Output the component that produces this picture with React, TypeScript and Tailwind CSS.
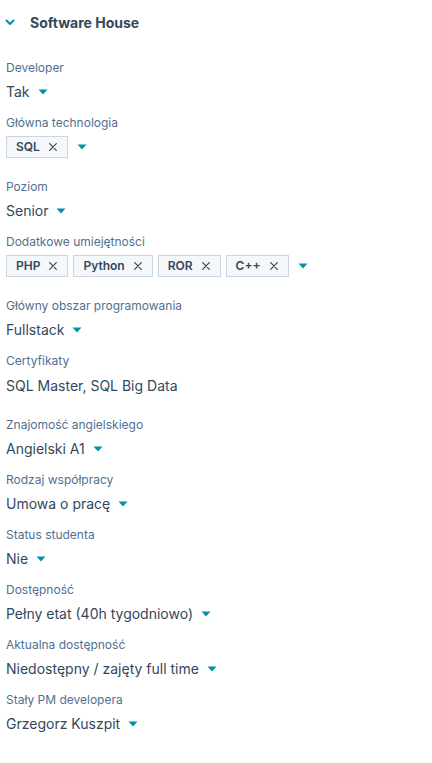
import React from "react";

const font = { fontFamily: "Inter, 'Noto Sans', sans-serif" };

function Caret({ className = "ml-[8px]" }: { className?: string }) {
  return (
    <svg width="10" height="6" viewBox="0 0 10 6" className={`${className} shrink-0`}>
      <path d="M0.5 0.5h9L5 5.5z" fill="#0091ae" />
    </svg>
  );
}

function Tag({ label }: { label: string }) {
  return (
    <span className="inline-flex h-[22px] items-center border border-[#cbd6e2] bg-[#f5f8fa] pl-[9px] pr-[10px] text-[12px] font-semibold text-[#33475b]">
      {label}
      <svg width="8" height="8" viewBox="0 0 8 8" className="ml-[9px]">
        <path d="M0.7 0.7l6.6 6.6M7.3 0.7L0.7 7.3" stroke="#33475b" strokeWidth="1.2" strokeLinecap="round" />
      </svg>
    </span>
  );
}

function Label({ children }: { children: React.ReactNode }) {
  return <div className="h-[16px] text-[12px] leading-[16px] text-[#516f90]">{children}</div>;
}

function SelectField({ label, value }: { label: string; value: string }) {
  return (
    <div className="mb-[13px]">
      <Label>{label}</Label>
      <div className="mt-[6px] flex h-[20px] items-center text-[14px] leading-[20px] text-[#33475b]">
        {value}
        <Caret />
      </div>
    </div>
  );
}

function TagField({ label, tags }: { label: string; tags: string[] }) {
  return (
    <div className="mb-[21px]">
      <Label>{label}</Label>
      <div className="mt-[5px] flex items-center gap-[5px]">
        {tags.map((t) => (
          <Tag key={t} label={t} />
        ))}
        <Caret className="ml-[4px]" />
      </div>
    </div>
  );
}

export default function App() {
  return (
    <div className="min-h-[763px] w-[432px] bg-white px-[6px] pt-[12px]" style={font}>
      <div className="mb-[28px] flex h-[20px] items-center">
        <svg width="10" height="7" viewBox="0 0 10 7" className="ml-[-1px]">
          <path d="M1.5 1.5L5 5l3.5-3.5" fill="none" stroke="#0091ae" strokeWidth="2" strokeLinecap="round" strokeLinejoin="round" />
        </svg>
        <span className="ml-[15px] text-[14px] font-bold text-[#33475b]">Software House</span>
      </div>

      <SelectField label="Developer" value="Tak" />
      <TagField label="Główna technologia" tags={["SQL"]} />
      <SelectField label="Poziom" value="Senior" />
      <TagField label="Dodatkowe umiejętności" tags={["PHP", "Python", "ROR", "C++"]} />
      <SelectField label="Główny obszar programowania" value="Fullstack" />

      <div className="mb-[21px]">
        <Label>Certyfikaty</Label>
        <div className="mt-[7px] h-[20px] text-[14px] leading-[20px] text-[#33475b]">SQL Master, SQL Big Data</div>
      </div>

      <SelectField label="Znajomość angielskiego" value="Angielski A1" />
      <SelectField label="Rodzaj współpracy" value="Umowa o pracę" />
      <SelectField label="Status studenta" value="Nie" />
      <SelectField label="Dostępność" value="Pełny etat (40h tygodniowo)" />
      <SelectField label="Aktualna dostępność" value="Niedostępny / zajęty full time" />
      <SelectField label="Stały PM developera" value="Grzegorz Kuszpit" />
    </div>
  );
}
